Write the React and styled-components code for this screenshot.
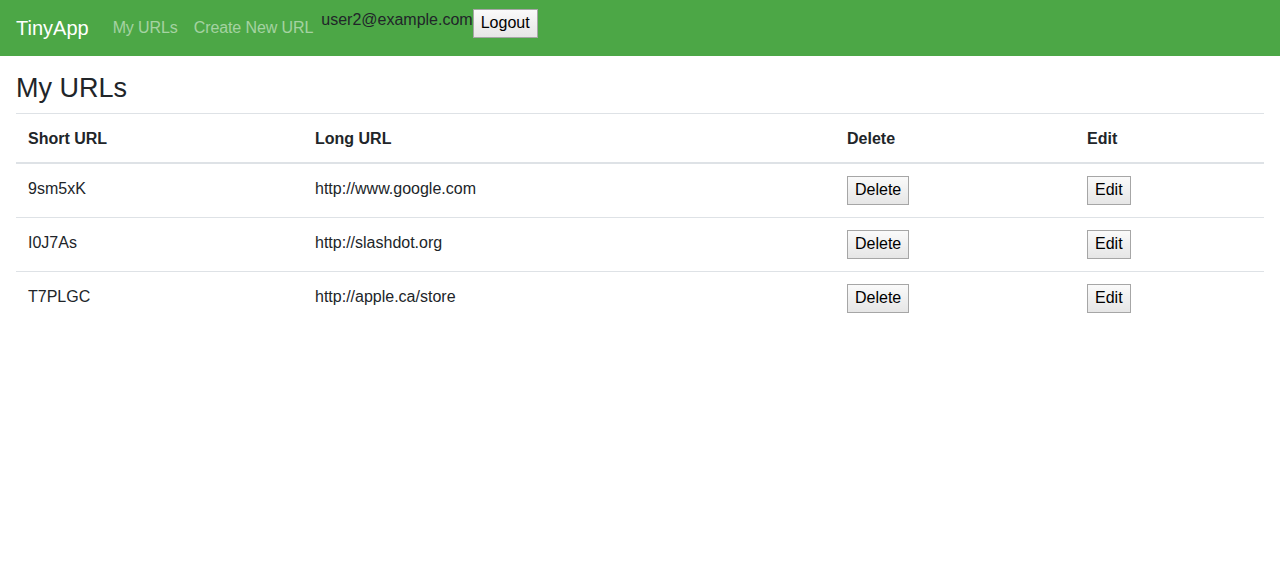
import React from 'react';
import styled, { createGlobalStyle } from 'styled-components';

const urls = [
  { id: '9sm5xK', long: 'http://www.google.com' },
  { id: 'I0J7As', long: 'http://slashdot.org' },
  { id: 'T7PLGC', long: 'http://apple.ca/store' },
];

export default function App() {
  return (
    <>
      <GlobalStyle />
      <Navbar>
        <Brand href="#">TinyApp</Brand>
        <NavLinks>
          <NavLink href="#">My URLs</NavLink>
          <NavLink href="#">Create New URL</NavLink>
        </NavLinks>
        <UserBox>
          <span>user2@example.com</span>
          <PlainButton>Logout</PlainButton>
        </UserBox>
      </Navbar>
      <Main>
        <Title>My URLs</Title>
        <Table>
          <colgroup>
            <col style={{ width: 287 }} />
            <col style={{ width: 532 }} />
            <col style={{ width: 240 }} />
            <col />
          </colgroup>
          <thead>
            <tr>
              <Th>Short URL</Th>
              <Th>Long URL</Th>
              <Th>Delete</Th>
              <Th>Edit</Th>
            </tr>
          </thead>
          <tbody>
            {urls.map((u) => (
              <tr key={u.id}>
                <Td>{u.id}</Td>
                <Td>{u.long}</Td>
                <ActionTd>
                  <PlainButton>Delete</PlainButton>
                </ActionTd>
                <ActionTd>
                  <PlainButton>Edit</PlainButton>
                </ActionTd>
              </tr>
            ))}
          </tbody>
        </Table>
      </Main>
    </>
  );
}

const GlobalStyle = createGlobalStyle`
  body {
    margin: 0;
    font-family: 'Liberation Sans', Arial, sans-serif;
    font-size: 16px;
    line-height: 1.5;
    color: #212529;
    background: #fff;
  }
`;

const Navbar = styled.nav`
  display: flex;
  align-items: center;
  height: 56px;
  box-sizing: border-box;
  padding: 8px 16px;
  background: #4ca746;
`;

const Brand = styled.a`
  font-size: 20px;
  line-height: 30px;
  padding: 5px 0;
  margin-right: 16px;
  color: #fff;
  text-decoration: none;
`;

const NavLinks = styled.div`
  display: flex;
`;

const NavLink = styled.a`
  padding: 8px;
  color: rgba(255, 255, 255, 0.5);
  text-decoration: none;
  letter-spacing: -0.1px;
`;

const UserBox = styled.div`
  align-self: flex-start;
  display: flex;
  align-items: flex-start;
  color: #212529;

  button {
    margin-top: 1px;
  }
`;

const PlainButton = styled.button`
  font-family: inherit;
  font-size: 16px;
  line-height: 20px;
  padding: 3px 7px 4px;
  color: #000;
  background: linear-gradient(#fafafa, #e6e6e6);
  border: 1px solid #a6a6a6;
  border-radius: 0;
`;

const Main = styled.main`
  padding: 0 16px;
`;

const Title = styled.h3`
  margin: 16px 0 9px;
  font-size: 27px;
  font-weight: 500;
  line-height: 32px;
`;

const Table = styled.table`
  width: 100%;
  table-layout: fixed;
  border-collapse: collapse;
`;

const Th = styled.th`
  padding: 13px 12px 11px;
  text-align: left;
  font-weight: 700;
  border-top: 1px solid #dee2e6;
  border-bottom: 2px solid #dee2e6;
`;

const Td = styled.td`
  padding: 13px 12px 11px;
  vertical-align: top;
  border-top: 1px solid #dee2e6;
`;

const ActionTd = styled(Td)`
  padding: 12px;
`;
